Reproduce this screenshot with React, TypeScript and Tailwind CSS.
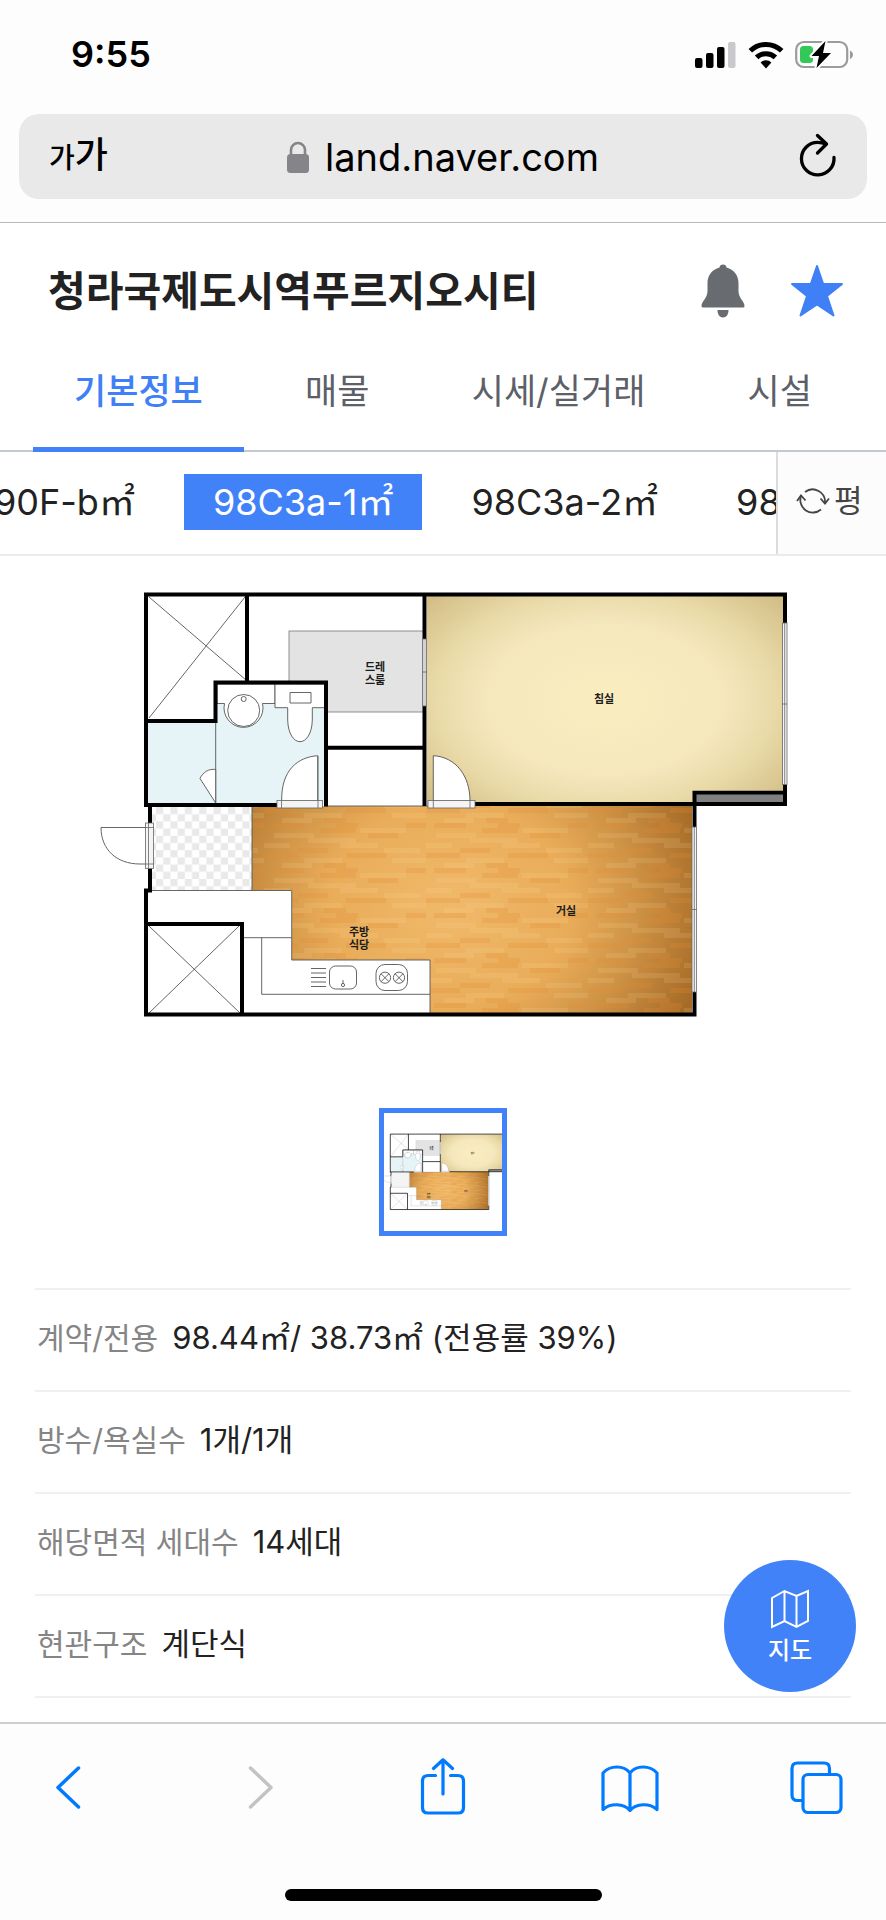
import { useId, useState } from "react";
import clsx from "clsx";

const TABS = ["기본정보", "매물", "시세/실거래", "시설"];

const AREA_TYPES = ["90F-b㎡", "98C3a-1㎡", "98C3a-2㎡", "98"];

const DETAILS = [
  { label: "계약/전용", value: "98.44㎡/ 38.73㎡ (전용률 39%)" },
  { label: "방수/욕실수", value: "1개/1개" },
  { label: "해당면적 세대수", value: "14세대" },
  { label: "현관구조", value: "계단식" },
];

// One repeat of the parquet: x, y, width, shade
const PLANKS: [number, number, number, "dark" | "light"][] = [
  [0, 0, 34, "dark"],
  [82, 0, 40, "dark"],
  [40, 5, 38, "light"],
  [128, 5, 34, "light"],
  [18, 10, 30, "light"],
  [60, 10, 22, "dark"],
  [8, 15, 32, "dark"],
  [72, 15, 22, "dark"],
  [142, 15, 20, "dark"],
  [96, 20, 46, "light"],
  [56, 20, 36, "dark"],
  [10, 25, 40, "light"],
  [104, 25, 30, "dark"],
  [44, 30, 48, "light"],
  [0, 35, 26, "light"],
  [76, 35, 38, "light"],
  [34, 40, 30, "dark"],
  [120, 40, 36, "light"],
];

function FloorPlan({ viewBox, className }: { viewBox: string; className?: string }) {
  const id = useId();
  const bed = `${id}bed`;
  const wood = `${id}wood`;
  const planks = `${id}planks`;
  const tiles = `${id}tiles`;
  const living = "M252 806H692V1013H430V960H292V890H252Z";

  return (
    <svg viewBox={viewBox} className={className} role="img" aria-label="평면도">
      <defs>
        <radialGradient id={bed} gradientUnits="userSpaceOnUse" cx="0" cy="0" r="1" gradientTransform="translate(605 700) scale(235 150)">
          <stop offset="0" stopColor="#faedbf" />
          <stop offset="0.5" stopColor="#f5e8bd" />
          <stop offset="0.72" stopColor="#e9daa8" />
          <stop offset="1" stopColor="#d3be86" />
        </radialGradient>
        <radialGradient id={wood} gradientUnits="userSpaceOnUse" cx="0" cy="0" r="1" gradientTransform="translate(450 905) scale(265 230)">
          <stop offset="0" stopColor="#f0b96a" />
          <stop offset="0.45" stopColor="#e9ad5a" />
          <stop offset="0.7" stopColor="#cf9346" />
          <stop offset="1" stopColor="#a56a26" />
        </radialGradient>
        <pattern id={planks} width="162" height="45" patternUnits="userSpaceOnUse" x="426" y="808">
          {PLANKS.map(([x, y, w, shade]) => (
            <rect
              key={`${x}-${y}`}
              x={x}
              y={y}
              width={w}
              height="5"
              fill={shade === "dark" ? "#e08a34" : "#ffe0a0"}
              opacity={shade === "dark" ? 0.24 : 0.13}
            />
          ))}
        </pattern>
        <pattern id={tiles} width="14.4" height="14.4" patternUnits="userSpaceOnUse" x="156" y="807">
          <rect width="14.4" height="14.4" fill="#fff" />
          <rect width="7.2" height="7.2" fill="#e9e9e9" />
          <rect x="7.2" y="7.2" width="7.2" height="7.2" fill="#e9e9e9" />
        </pattern>
      </defs>

      {/* room fills */}
      <path d="M427 595H784V792H694V805H427Z" fill={`url(#${bed})`} />
      <path d={living} fill={`url(#${wood})`} />
      <path d={living} fill={`url(#${planks})`} />
      <rect x="152" y="806" width="100" height="84" fill={`url(#${tiles})`} />
      <rect x="289" y="631" width="135" height="81" fill="#e3e3e3" stroke="#777" strokeWidth="0.8" />
      <rect x="217" y="684" width="108" height="120" fill="#e6f3f7" />
      <rect x="148" y="722" width="70" height="82" fill="#e6f3f7" />
      <rect x="696" y="795" width="87" height="8" fill="#808080" />

      {/* fixtures and thin outlines */}
      <g fill="none" stroke="#555" strokeWidth="0.9">
        <path d="M149 597L246 680M245 597L149 718M149 926L240 1013M239 926L149 1013" />
        <path d="M217 684V703.500H224.500A19.500 19.500 0 1 0 262.500 703.500H275V684Z" fill="#fff" />
        <circle cx="243.700" cy="710.500" r="16" fill="#fff" />
        <circle cx="243.700" cy="699" r="2.500" />
        <path d="M275 684V707.700H287.700V720C288 734 294 741.700 300 741.700S312 734 312.300 720V707.700H325V684Z" fill="#fff" />
        <path d="M290 692.500H311V703H290Z" />
        <path d="M215.700 722V803" />
        <path d="M215.700 769.500C209 768.500 203 772 200 778.500L215.700 803Z" fill="#fff" />
        <path d="M317.700 801V755.700C298 757 281 770 281.700 801Z" fill="#fff" />
        <path d="M433.300 801V755.700C456 757 470 776 470 801Z" fill="#fff" />
        <path d="M153 827.500H101C101 849 116 864 140 864H153" />
        <path d="M252 806V890.500M152 890.500H291.700V960H430V1013M244 937.700H291.700M261.700 937.700V994.300H430" />
        <path d="M326 806H428" />
        <path d="M311 968.500H326M311 973H326M311 977.500H326M311 982H326M311 986.500H326" />
        <rect x="329.500" y="966" width="27" height="23" rx="6" />
        <circle cx="343" cy="985" r="1.600" />
        <path d="M343 980V984" />
        <rect x="376" y="964.500" width="31.500" height="26" rx="9" />
        <circle cx="385" cy="977.700" r="5.600" />
        <circle cx="399" cy="977.700" r="5.600" />
        <path d="M381 973.700L389 981.700M389 973.700L381 981.700M395 973.700L403 981.700M403 973.700L395 981.700" />
      </g>

      {/* walls */}
      <g fill="none" stroke="#000" strokeWidth="4">
        <path d="M146 807V594.500H785V623M785 784.500V804H475" />
        <path d="M247 594V682M146 721H215.500V682.500H326V806.500M144 805H277" />
        <path d="M326 747.700H424.500M424.500 594V639M424.500 706V806" />
        <path d="M787 792.700H694.500V827M694.500 991.700V1014.500H146V890.500H150V868.500M150 823V805" />
        <path d="M146 924H242V1014" />
      </g>

      {/* windows and door sills */}
      <g fill="#f4f4f4" stroke="#666" strokeWidth="0.8">
        <rect x="422.500" y="639" width="4" height="67" fill="#d0d2d6" />
        <path d="M422 672H427" />
        <rect x="782.500" y="623" width="4.500" height="161.500" />
        <path d="M784.700 623V784.500M782 704H787" />
        <rect x="692" y="827" width="4.500" height="165" />
        <path d="M694.300 827V992M692 909.500H697" />
        <rect x="277" y="800.500" width="45.500" height="7.500" />
        <path d="M281.500 800.500V808M318 756V808" />
        <rect x="428" y="800.500" width="47" height="7.500" />
        <path d="M433.300 800.500V808M470 800.500V808" />
        <rect x="145.500" y="823" width="8" height="45.500" />
        <path d="M148.500 823V868.500M145.500 827.500H153.500M145.500 864H153.500" />
      </g>

      <g className="font-bold" fontSize="11" textAnchor="middle" fill="#1c1c1c">
        <text x="375" y="671">드레</text>
        <text x="375" y="684">스룸</text>
        <text x="359" y="936">주방</text>
        <text x="359" y="949">식당</text>
        <text x="604" y="703">침실</text>
        <text x="566" y="915">거실</text>
      </g>
    </svg>
  );
}

function StatusBar() {
  return (
    <div className="flex h-[114px] items-start justify-between pt-8 pr-8 pl-[71px]">
      <span className="text-[36px] leading-[45px] font-semibold text-black">9:55</span>
      <div className="flex items-center gap-[11px] pt-2">
        <svg width="42" height="28" viewBox="0 0 42 28" aria-hidden="true">
          <rect x="0" y="17" width="7.500" height="10" rx="2" />
          <rect x="11" y="12" width="7.500" height="15" rx="2" />
          <rect x="22" y="6" width="7.500" height="21" rx="2" />
          <rect x="33" y="1" width="7.500" height="26" rx="2" fill="#c9c9cb" />
        </svg>
        <svg width="36" height="28" viewBox="0 0 36 28" fill="none" stroke="#000" strokeWidth="5" aria-hidden="true">
          <path d="M2.300 9.800A22.500 22.500 0 0 1 33.700 9.800" />
          <path d="M8.600 16.400A13.600 13.600 0 0 1 27.400 16.400" />
          <path d="M18 27.500L12.600 21.500A7.800 7.800 0 0 1 23.400 21.500Z" fill="#000" stroke="none" />
        </svg>
        <svg width="59" height="29" viewBox="0 0 59 29" aria-hidden="true">
          <rect x="1.200" y="2" width="51" height="25" rx="7.500" fill="none" stroke="#9b9b9d" strokeWidth="2.200" />
          <path d="M55 10.500C59 12.500 59 17 55 19Z" fill="#9b9b9d" />
          <rect x="5" y="6" width="13" height="17" rx="3.500" fill="#34c759" />
          <path
            d="M30.500 1L16.500 16H24L21.500 28L36 13H28Z"
            stroke="#fdfdfd"
            strokeWidth="4"
            strokeLinejoin="round"
            paintOrder="stroke"
          />
        </svg>
      </div>
    </div>
  );
}

function AddressBar() {
  return (
    <div className="border-b border-[#b9b9bc] px-[19px] pb-[23px]">
      <div className="flex h-[85px] items-center justify-between rounded-[20px] bg-[#e9e9ea] px-[30px] text-black">
        <button type="button" aria-label="글자 크기" className="flex w-16 items-baseline font-medium">
          <span className="text-[28px] leading-10">가</span>
          <span className="text-[36px] leading-10">가</span>
        </button>
        <button type="button" className="flex items-center gap-4">
          <svg width="22" height="32" viewBox="0 0 22 32" aria-hidden="true">
            <rect x="0" y="13" width="22" height="19" rx="3.500" fill="#858489" />
            <path d="M4 14V9A7 7 0 0 1 18 9V14" fill="none" stroke="#858489" strokeWidth="2.600" />
          </svg>
          <span className="text-[38px] leading-[48px]">land.naver.com</span>
        </button>
        <button type="button" aria-label="새로고침" className="flex w-16 justify-end">
          <svg width="40" height="48" viewBox="0 0 40 48" fill="none" stroke="#000" strokeWidth="3.300" strokeLinecap="round" strokeLinejoin="round">
            <path d="M37 24.500A16.300 16.300 0 1 1 20.700 9.300Q25 9.300 29 11" />
            <path d="M20.500 2.500L29.500 11L20.500 20" />
          </svg>
        </button>
      </div>
    </div>
  );
}

export default function App() {
  const [tab, setTab] = useState(TABS[0]);
  const [area, setArea] = useState(AREA_TYPES[1]);

  return (
    <div className="flex min-h-screen flex-col bg-white font-['Inter','Noto_Sans_CJK_KR',sans-serif] text-[#222]">
      <header className="bg-[#fdfdfd]">
        <StatusBar />
        <AddressBar />
      </header>

      <main className="relative flex-1 overflow-hidden">
        <div className="flex h-[136px] items-center justify-between pr-[43px] pl-12">
          <h1 className="text-[41px] leading-[52px] font-bold">청라국제도시역푸르지오시티</h1>
          <div className="flex items-center gap-[46px]">
            <button type="button" aria-label="알림">
              <svg width="44" height="54" viewBox="0 0 44 54" fill="#686b70">
                <path d="M18.500 3.500C18.500 -0.500 25.500 -0.500 25.500 3.500C33 5.500 37.500 11.500 37.500 19V27C37.500 34 43.500 37.500 43.500 42Q43.500 43.500 42 43.500H2Q0.500 43.500 0.500 42C0.500 37.500 6.500 34 6.500 27V19C6.500 11.500 11 5.500 18.500 3.500Z" />
                <path d="M16.500 46H27.500C27.500 50.500 25.500 53.500 22 53.500S16.500 50.500 16.500 46Z" />
              </svg>
            </button>
            <button type="button" aria-label="관심단지">
              <svg width="52" height="54" viewBox="0 0 52 54" fill="#4080f7" stroke="#4080f7" strokeWidth="2" strokeLinejoin="round">
                <path d="M26 2L32.200 20H51L36 32L42.500 51.500L26 40.500L9.500 51.500L16 32L1 20H19.800Z" />
              </svg>
            </button>
          </div>
        </div>

        <nav className="flex h-[93px] justify-between border-b-2 border-[#c5cad2] px-[33px]">
          {TABS.map((name) => (
            <button
              key={name}
              type="button"
              onClick={() => setTab(name)}
              className={clsx(
                "-mb-0.5 flex items-start border-b-[5px] px-[41px] pt-2 text-[35px] leading-[48px]",
                tab === name ? "border-[#4282f9] font-medium text-[#4080f7]" : "border-transparent text-[#5c6068]",
              )}
            >
              {name}
            </button>
          ))}
        </nav>

        <div className="flex h-[104px] border-b-2 border-[#ebebed]">
          <div className="flex min-w-0 flex-1 items-start overflow-hidden pt-[22px]">
            <div className="-ml-[35px] flex gap-5">
              {AREA_TYPES.map((name) => (
                <button
                  key={name}
                  type="button"
                  onClick={() => setArea(name)}
                  className={clsx(
                    "h-14 px-[29px] text-[36px] leading-[54px] whitespace-nowrap",
                    area === name && "bg-[#4282f9] text-white",
                  )}
                >
                  {name}
                </button>
              ))}
            </div>
          </div>
          <button
            type="button"
            className="flex w-[110px] shrink-0 items-center gap-1 border-l-2 border-[#dcdcde] bg-[#fcfcfc] pb-1 pl-[18px] text-[31px] leading-10 text-[#444]"
          >
            <svg width="34" height="30" viewBox="0 0 34 30" fill="none" stroke="#444" strokeWidth="1.800" aria-hidden="true">
              <path d="M9 6A12.500 12.500 0 0 1 29 17M25 23.500A12.500 12.500 0 0 1 5 10" />
              <path d="M24.500 12.500L29 17.500L33 12.500M1 15L5 9.500L9.500 14.500" />
            </svg>
            평
          </button>
        </div>

        <div className="flex flex-col items-center pt-6">
          <FloorPlan viewBox="88 580 710 450" className="w-[710px] max-w-full" />
          <button type="button" aria-label="평면도 1" className="mt-[78px] border-[5px] border-[#4282f9]">
            <FloorPlan viewBox="111 477 657 657" className="size-[118px]" />
          </button>
        </div>

        <dl className="mx-[35px] mt-[52px] border-t-2 border-[#f0f0f2] leading-10">
          {DETAILS.map((row) => (
            <div key={row.label} className="flex h-[102px] items-center gap-[14px] border-b-2 border-[#f0f0f2] px-0.5 pb-1">
              <dt className="text-[30px] text-[#858585]">{row.label}</dt>
              <dd className="text-[31px]">{row.value}</dd>
            </div>
          ))}
        </dl>

        {/* map shortcut floats over the list */}
        <button
          type="button"
          className="absolute right-[30px] bottom-[30px] flex size-[132px] flex-col items-center justify-center gap-1.5 rounded-full bg-[#4282f9] pt-1 text-2xl font-medium text-white"
        >
          <svg width="40" height="40" viewBox="0 0 40 40" fill="none" stroke="#fff" strokeWidth="2" aria-hidden="true">
            <path d="M2 9L14.500 2L26.500 7L38 2V32L26.500 38L14.500 32L2 38ZM14.500 2V32M26.500 7V38" />
          </svg>
          지도
        </button>
      </main>

      <footer className="h-[198px] border-t-2 border-[#cfcfd1] bg-[#fdfdfd] pt-[34px]">
        <div className="flex justify-between px-10 text-[#007aff]">
          <button type="button" aria-label="뒤로">
            <svg width="56" height="60" viewBox="0 0 56 60" fill="none" stroke="currentColor" strokeWidth="3.500" strokeLinecap="round" strokeLinejoin="round">
              <path d="M38.500 10L18 29.500L38.500 49" />
            </svg>
          </button>
          <button type="button" aria-label="앞으로" className="text-[#c3c3c5]" disabled>
            <svg width="56" height="60" viewBox="0 0 56 60" fill="none" stroke="currentColor" strokeWidth="3.500" strokeLinecap="round" strokeLinejoin="round">
              <path d="M23.500 10L44 29.500L23.500 49" />
            </svg>
          </button>
          <button type="button" aria-label="공유">
            <svg width="56" height="60" viewBox="-1 0 56 60" fill="none" stroke="currentColor" strokeWidth="3.200" strokeLinecap="round" strokeLinejoin="round">
              <path d="M21.500 17.500H14Q8.500 17.500 8.500 23V49.500Q8.500 55 14 55H44Q49.500 55 49.500 49.500V23Q49.500 17.500 44 17.500H36.500" />
              <path d="M29 36V1.800M19.500 10.500L29 1.800L38.500 10.500" />
            </svg>
          </button>
          <button type="button" aria-label="책갈피">
            <svg width="60" height="60" viewBox="0 0 60 60" fill="none" stroke="currentColor" strokeWidth="3.200" strokeLinecap="round" strokeLinejoin="round">
              <path d="M30 15C24 7 10 7 3 15V51.500C10 45 24 45 30 52.500C36 45 50 45 57 51.500V15C50 7 36 7 30 15ZM30 15V52" />
            </svg>
          </button>
          <button type="button" aria-label="탭">
            <svg width="56" height="60" viewBox="0 0 56 60" fill="none" stroke="currentColor" strokeWidth="3.200">
              <rect x="13" y="16.500" width="38" height="38" rx="5" />
              <path d="M13 42.500H7.500Q2 42.500 2 37V10.500Q2 5 7.500 5H34Q39.500 5 39.500 10.500V16" />
            </svg>
          </button>
        </div>
        <div className="mx-auto mt-[71px] h-3 w-[317px] rounded-full bg-black" />
      </footer>
    </div>
  );
}
